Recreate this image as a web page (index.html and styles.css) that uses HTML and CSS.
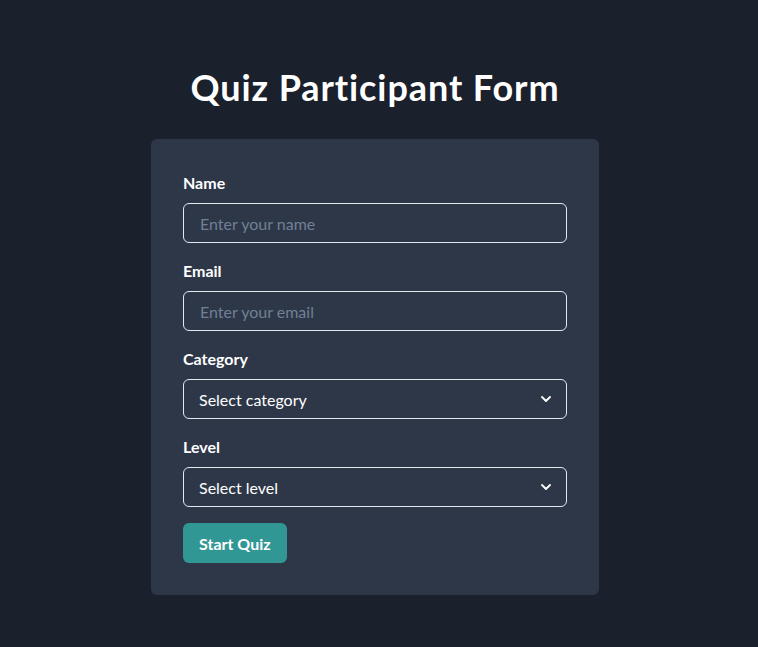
FILE: index.html
```html
<!DOCTYPE html>
<html lang="en">
<head>
<meta charset="utf-8">
<title>Quiz Participant Form</title>
<link rel="stylesheet" href="styles.css">
</head>
<body>
<main class="page">
  <h1 class="title">Quiz Participant Form</h1>
  <form class="card">
    <div class="field">
      <label class="label" for="name">Name</label>
      <input class="control" id="name" type="text" placeholder="Enter your name">
    </div>
    <div class="field">
      <label class="label" for="email">Email</label>
      <input class="control" id="email" type="email" placeholder="Enter your email">
    </div>
    <div class="field">
      <label class="label" for="category">Category</label>
      <div class="select-wrap">
        <select class="control select" id="category">
          <option>Select category</option>
        </select>
        <svg class="chevron" viewBox="0 0 10 6" width="10" height="6" aria-hidden="true"><path d="M1 1l4 4 4-4" fill="none" stroke="#fff" stroke-width="1.8" stroke-linecap="round" stroke-linejoin="round"/></svg>
      </div>
    </div>
    <div class="field">
      <label class="label" for="level">Level</label>
      <div class="select-wrap">
        <select class="control select" id="level">
          <option>Select level</option>
        </select>
        <svg class="chevron" viewBox="0 0 10 6" width="10" height="6" aria-hidden="true"><path d="M1 1l4 4 4-4" fill="none" stroke="#fff" stroke-width="1.8" stroke-linecap="round" stroke-linejoin="round"/></svg>
      </div>
    </div>
    <button class="button" type="button">Start Quiz</button>
  </form>
</main>
</body>
</html>
```
FILE: styles.css
```css
* { box-sizing: border-box; }
html, body { margin: 0; padding: 0; }
body {
  background: #1a202c;
  color: #fff;
  font-family: "Lato", "Noto Sans", "Liberation Sans", sans-serif;
  min-height: 647px;
}
.page {
  display: flex;
  flex-direction: column;
  align-items: center;
  padding: 67px 8px 0 0;
}
.title {
  margin: 0 0 32px;
  font-size: 36px;
  line-height: 40px;
  font-weight: 700;
  letter-spacing: 0.9px;
}
.card {
  width: 448px;
  background: #2d3748;
  border-radius: 6px;
  padding: 32px;
  display: flex;
  flex-direction: column;
}
.field {
  display: flex;
  flex-direction: column;
  margin-bottom: 16px;
}
.label {
  font-size: 16px;
  line-height: 24px;
  font-weight: 700;
  margin-bottom: 8px;
  color: #fff;
}
.control {
  width: 100%;
  height: 40px;
  border: 1px solid #e2e8f0;
  border-radius: 6px;
  background: #2d3748;
  color: #fff;
  font-family: inherit;
  font-size: 16px;
  padding: 0 16px;
  outline: none;
}
.control::placeholder { color: #718096; }
.select-wrap { position: relative; }
.select {
  appearance: none;
  -webkit-appearance: none;
  padding-left: 15px;
}
.chevron {
  position: absolute;
  right: 16px;
  top: 17px;
  pointer-events: none;
}
.button {
  align-self: flex-start;
  height: 40px;
  padding: 0 16px;
  border: none;
  border-radius: 6px;
  background: #319795;
  color: #fff;
  font-family: inherit;
  font-size: 16px;
  font-weight: 700;
}
```
